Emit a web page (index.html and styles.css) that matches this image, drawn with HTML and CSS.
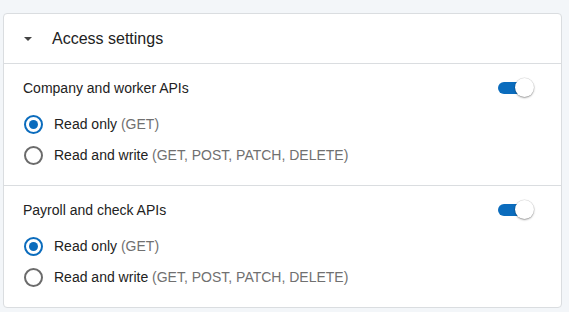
FILE: index.html
```html
<!DOCTYPE html>
<html>
<head>
<meta charset="utf-8">
<link rel="stylesheet" href="styles.css">
</head>
<body>
<div class="card">
  <div class="header">
    <span class="caret"></span>
    <span class="header-title">Access settings</span>
  </div>
  <div class="section">
    <div class="section-head">
      <span class="section-title">Company and worker APIs</span>
      <span class="toggle"><span class="thumb"></span></span>
    </div>
    <div class="options">
      <label class="option"><span class="radio checked"></span><span class="label">Read only <span class="muted">(GET)</span></span></label>
      <label class="option"><span class="radio"></span><span class="label">Read and write <span class="muted">(GET, POST, PATCH, DELETE)</span></span></label>
    </div>
  </div>
  <div class="section last">
    <div class="section-head">
      <span class="section-title">Payroll and check APIs</span>
      <span class="toggle"><span class="thumb"></span></span>
    </div>
    <div class="options">
      <label class="option"><span class="radio checked"></span><span class="label">Read only <span class="muted">(GET)</span></span></label>
      <label class="option"><span class="radio"></span><span class="label">Read and write <span class="muted">(GET, POST, PATCH, DELETE)</span></span></label>
    </div>
  </div>
</div>
</body>
</html>
```
FILE: styles.css
```css
html, body {
  margin: 0;
  padding: 0;
}
body {
  background: #f3f6f9;
  font-family: "Liberation Sans", Arial, sans-serif;
  color: #222;
  padding: 13px 0 0 3px;
  height: 312px;
  box-sizing: border-box;
}
.card {
  width: 559px;
  box-sizing: border-box;
  background: #fff;
  border: 1px solid #dadde0;
  border-radius: 4px;
}
.header {
  height: 49px;
  display: flex;
  align-items: center;
  border-bottom: 1px solid #dadde0;
  padding-left: 20px;
}
.caret {
  width: 0;
  height: 0;
  border-left: 4px solid transparent;
  border-right: 4px solid transparent;
  border-top: 4px solid #444;
  margin-top: 1px;
}
.header-title {
  margin-left: 20px;
  font-size: 16px;
  color: #222;
}
.section {
  padding: 14px 28px 15px 19px;
  border-bottom: 1px solid #dadde0;
}
.section.last {
  border-bottom: none;
}
.section-head {
  height: 20px;
  display: flex;
  align-items: center;
  justify-content: space-between;
}
.section-title {
  font-size: 14px;
  color: #222;
}
.toggle {
  position: relative;
  width: 34px;
  height: 12px;
  border-radius: 6px;
  background: #0b6cbd;
  margin-right: 1px;
}
.thumb {
  position: absolute;
  right: -2px;
  top: -4px;
  width: 19px;
  height: 19px;
  border-radius: 50%;
  background: #fff;
  box-shadow: 0 1px 2px rgba(0,0,0,0.35), 0 0 0 0.5px rgba(0,0,0,0.12);
}
.options {
  margin-top: 11px;
  display: flex;
  flex-direction: column;
  gap: 1px;
}
.option {
  height: 30px;
  display: flex;
  align-items: center;
  font-size: 14px;
}
.radio {
  width: 19px;
  height: 19px;
  box-sizing: border-box;
  border-radius: 50%;
  border: 2px solid #6b6b6b;
  margin-left: 1px;
  display: flex;
  align-items: center;
  justify-content: center;
}
.radio.checked {
  border-color: #0b6cbd;
}
.radio.checked::after {
  content: "";
  width: 9px;
  height: 9px;
  border-radius: 50%;
  background: #0b6cbd;
}
.label {
  margin-left: 11px;
  color: #222;
}
.muted {
  color: #707070;
}
```
